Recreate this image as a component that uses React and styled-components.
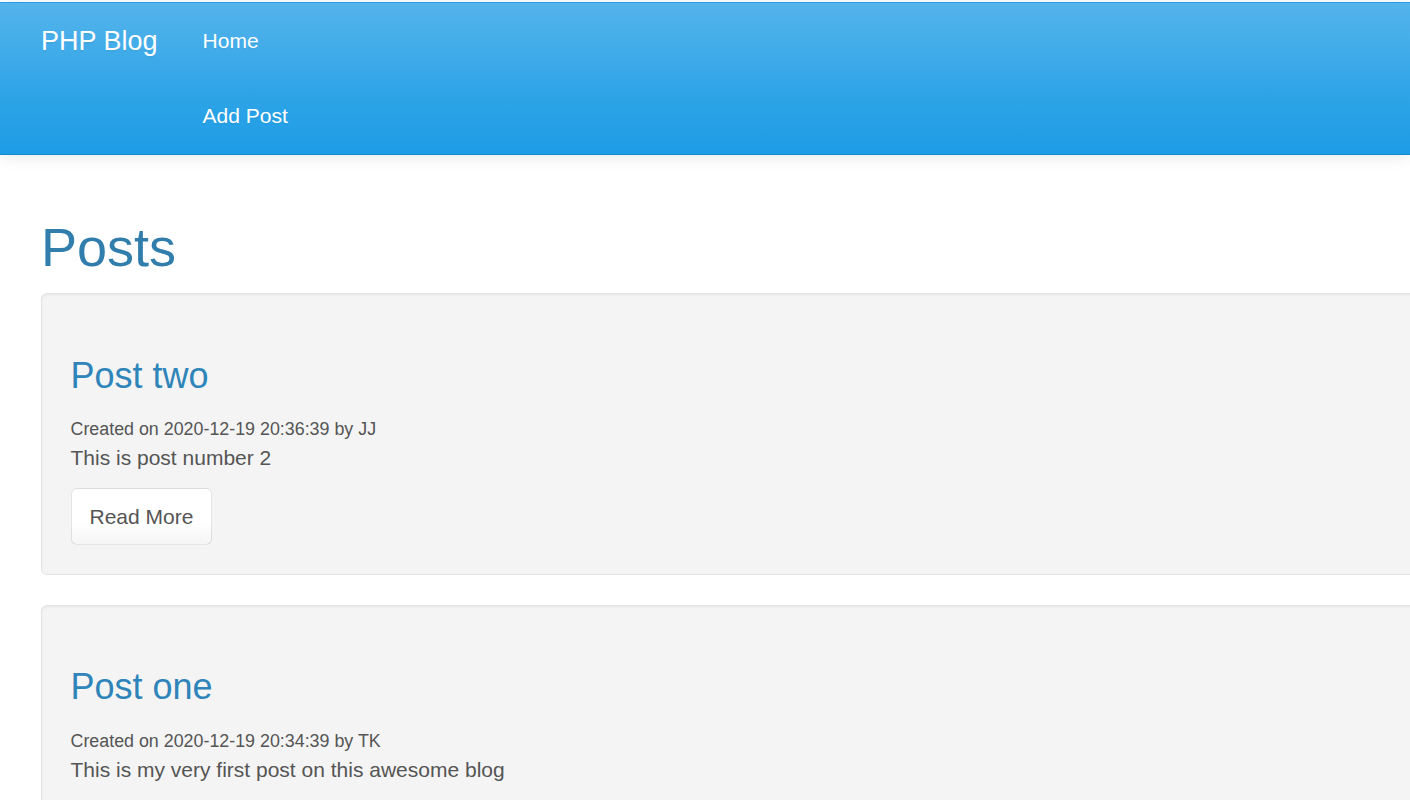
import React from "react";
import styled, { createGlobalStyle } from "styled-components";

const Global = createGlobalStyle`
  html, body { margin: 0; padding: 0; overflow: hidden; background: #fff; }
  body {
    font-family: "Liberation Sans", Arial, Helvetica, sans-serif;
    font-size: 21px;
    line-height: 1.428571;
    color: #555555;
  }
  * { box-sizing: border-box; }
`;

const Navbar = styled.nav`
  display: flex;
  align-items: flex-start;
  border-top: 1px solid #2a9ce0;
  border-bottom: 1px solid #178acc;
  background-image: linear-gradient(#54b4eb, #2fa4e7 60%, #1d9ce5);
  box-shadow: 0 1.5px 15px rgba(0, 0, 0, 0.1);
  margin-top: 2px;
  margin-bottom: 30px;
  padding-left: 18.5px;
  padding-bottom: 1px;
`;

const Brand = styled.a`
  display: block;
  height: 75px;
  padding: 22.5px;
  font-size: 27px;
  line-height: 30px;
  color: #fff;
  text-decoration: none;
  text-shadow: 0 1.5px 0 rgba(0, 0, 0, 0.05);
  white-space: nowrap;
`;

const NavList = styled.ul`
  list-style: none;
  margin: 0;
  padding: 0;
  display: flex;
  flex-direction: column;
`;

const NavLink = styled.a`
  display: block;
  padding: 22.5px;
  font-size: 21px;
  line-height: 30px;
  color: #fff;
  text-decoration: none;
  text-shadow: 0 1.5px 0 rgba(0, 0, 0, 0.05);
`;

const Container = styled.main`
  display: flow-root;
  padding-left: 41px;
  width: 1600px;
`;

const PageTitle = styled.h1`
  margin: 33px 0 16px;
  font-size: 54px;
  line-height: 1.1;
  font-weight: 400;
  color: #317eac;
`;

const Well = styled.div`
  background: #f4f4f4;
  border: 1px solid #e3e3e3;
  border-radius: 6px;
  box-shadow: inset 0 1.5px 1.5px rgba(0, 0, 0, 0.05);
  padding: 28.5px;
  margin-bottom: 30px;
`;

const PostTitle = styled.h3`
  margin: 33px 0 18px;
  font-size: 36px;
  line-height: 1.1;
  font-weight: 400;
  color: #2f84b9;
`;

const Meta = styled.small`
  font-size: 85%;
`;

const Body = styled.p`
  margin: 0 0 15px;
`;

const Button = styled.a`
  display: inline-block;
  padding: 12.5px 18px;
  font-size: 21px;
  line-height: 30px;
  color: #555;
  text-decoration: none;
  background-image: linear-gradient(#ffffff, #ffffff 60%, #f5f5f5);
  border: 1px solid rgba(0, 0, 0, 0.1);
  border-radius: 6px;
`;

const posts = [
  { title: "Post two", date: "2020-12-19 20:36:39", author: "JJ", body: "This is post number 2" },
  { title: "Post one", date: "2020-12-19 20:34:39", author: "TK", body: "This is my very first post on this awesome blog" },
];

export default function App() {
  return (
    <>
      <Global />
      <Navbar>
        <Brand href="#">PHP Blog</Brand>
        <NavList>
          <li><NavLink href="#">Home</NavLink></li>
          <li><NavLink href="#">Add Post</NavLink></li>
        </NavList>
      </Navbar>
      <Container>
        <PageTitle>Posts</PageTitle>
        {posts.map((p) => (
          <Well key={p.title}>
            <PostTitle>{p.title}</PostTitle>
            <Meta>Created on {p.date} by {p.author}</Meta>
            <Body>{p.body}</Body>
            <Button href="#">Read More</Button>
          </Well>
        ))}
      </Container>
    </>
  );
}
